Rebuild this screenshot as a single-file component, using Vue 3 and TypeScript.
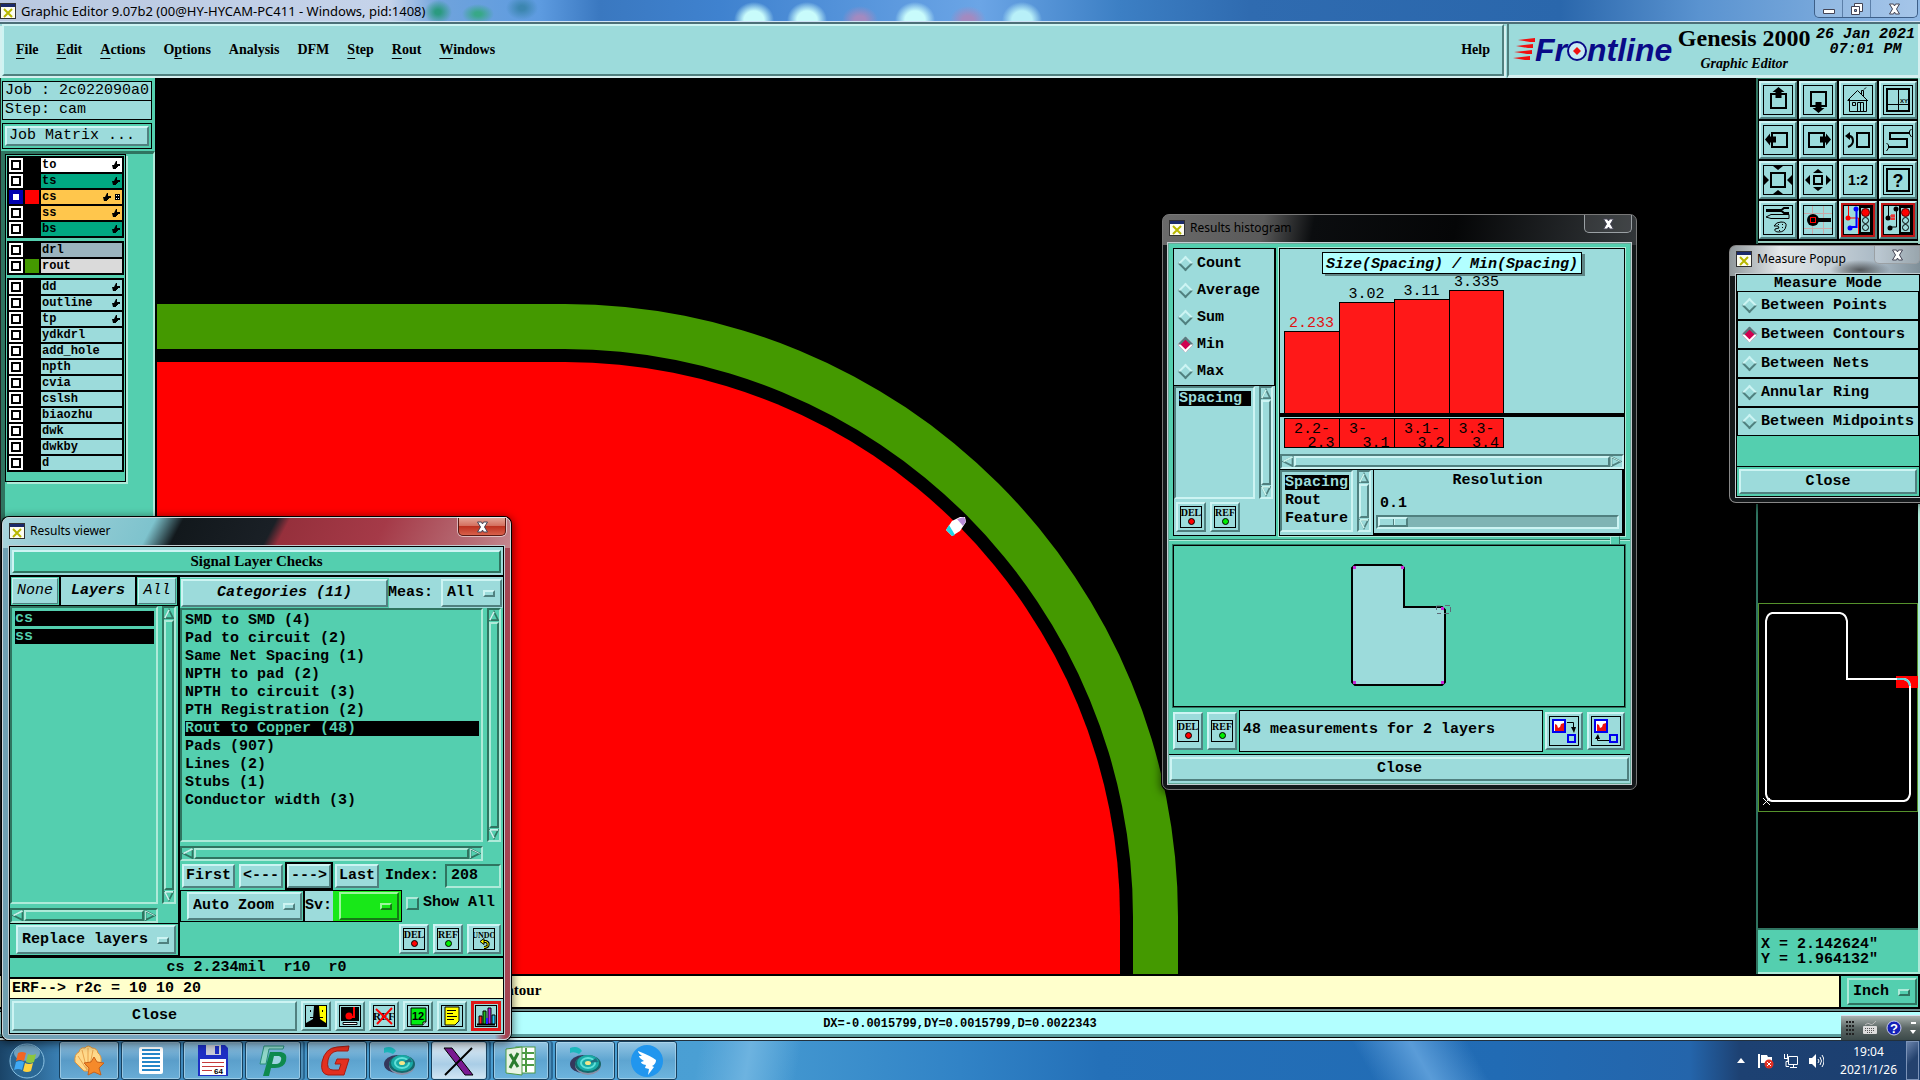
<script setup lang="ts">
import { ref } from 'vue'

interface Layer { name: string; tone: string; swatch?: string; on?: boolean; hand?: boolean; grid?: boolean }
interface Icon { label: string; body: string; alert?: boolean }

const menus = [
  { pre: '', key: 'F', post: 'ile' },
  { pre: '', key: 'E', post: 'dit' },
  { pre: '', key: 'A', post: 'ctions' },
  { pre: 'O', key: 'p', post: 'tions' },
  { pre: 'Analysis', key: '', post: '' },
  { pre: 'DFM', key: '', post: '' },
  { pre: '', key: 'S', post: 'tep' },
  { pre: '', key: 'R', post: 'out' },
  { pre: '', key: 'W', post: 'indows' },
]

const layerGroups: Layer[][] = [
  [
    { name: 'to', tone: 'white', hand: true },
    { name: 'ts', tone: 'mask', hand: true },
    { name: 'cs', tone: 'signal', swatch: '#ff0000', on: true, hand: true, grid: true },
    { name: 'ss', tone: 'signal', hand: true },
    { name: 'bs', tone: 'mask', hand: true },
  ],
  [
    { name: 'drl', tone: 'drill' },
    { name: 'rout', tone: 'rout', swatch: '#449900' },
  ],
  [
    { name: 'dd', tone: 'plain', hand: true },
    { name: 'outline', tone: 'plain', hand: true },
    { name: 'tp', tone: 'plain', hand: true },
    ...['ydkdrl', 'add_hole', 'npth', 'cvia', 'cslsh', 'biaozhu', 'dwk', 'dwkby', 'd'].map((name) => ({ name, tone: 'plain' })),
  ],
]

const frame = '<rect x=".5" y=".5" width="29" height="29" fill="none" stroke="#000"/>'
const lights = (x: number) =>
  `<rect x="${x}" y="2" width="11" height="26" fill="#9cdbdb" stroke="#000" stroke-width="2"/>` +
  `<circle cx="${x + 5.5}" cy="7.5" r="4" fill="#f00" stroke="#500"/>` +
  `<circle cx="${x + 5.5}" cy="15.5" r="3" fill="none" stroke="#000"/>` +
  `<circle cx="${x + 5.5}" cy="22.5" r="3" fill="none" stroke="#000"/>`

const tools: Icon[] = [
  { label: 'Pan up', body: frame + '<rect x="8" y="9" width="15" height="14" fill="none" stroke="#000" stroke-width="2"/><path d="M15.5 2l6 5h-3v6h-6V7h-3z"/>' },
  { label: 'Pan down', body: frame + '<rect x="8" y="7" width="15" height="14" fill="none" stroke="#000" stroke-width="2"/><path d="M15.5 28l6-5h-3v-6h-6v6h-3z"/>' },
  { label: 'Home', body: frame + '<path d="M4.500 15.500l10-10 10 10M6.500 14v12.500h17V14M14.500 26v-8.500h6V26M17.500 18v8M9.500 17.500h3v3h-3zM18.500 9V5.500h2V11M21 4.500l2-2M5 15.500h20" fill="none" stroke="#000"/>' },
  { label: 'Grid view', body: frame + '<rect x="4" y="4" width="22" height="22" fill="none" stroke="#000" stroke-width="2"/><path d="M15.5 4v22M4 19.5h22" stroke="#000"/><text x="17" y="18" font-size="6" font-family="Liberation Sans">XY</text>' },
  { label: 'Pan left', body: frame + '<rect x="9" y="8" width="15" height="14" fill="none" stroke="#000" stroke-width="2"/><path d="M2 14.5l5-6v3h6v6H7v3z"/>' },
  { label: 'Pan right', body: frame + '<rect x="6" y="8" width="15" height="14" fill="none" stroke="#000" stroke-width="2"/><path d="M28 14.5l-5-6v3h-6v6h6v3z"/>' },
  { label: 'Previous view', body: frame + '<rect x="14" y="8" width="12" height="14" fill="none" stroke="#000" stroke-width="2"/><path d="M5 11h2q3 1 3 5t-5 6" fill="none" stroke="#000" stroke-width="2"/><path d="M2 11l5-4v8z"/>' },
  { label: 'Serpentine', body: frame + '<path d="M26 8H7v6h17v8H6" fill="none" stroke="#000" stroke-width="2"/><path d="M28.500 4l-2 2v3l2 3M3.500 18l2 2v3l-2 3" fill="none" stroke="#000"/>' },
  { label: 'Zoom out', body: frame + '<rect x="8" y="8" width="14" height="14" fill="none" stroke="#000" stroke-width="2"/><path d="M10 1h10l-5 4zM10 29h10l-5-4zM1 10v10l5-5zM29 10v10l-5-5z"/>' },
  { label: 'Zoom in', body: frame + '<rect x="11" y="11" width="8" height="8" fill="none" stroke="#000" stroke-width="2"/><path d="M10 8h10l-5-4zM10 22h10l-5 4zM7 10v10l-5-5zM23 10v10l5-5z"/>' },
  { label: 'Scale', body: frame + '<text x="15" y="20" text-anchor="middle" font-size="14" font-weight="bold" font-family="Liberation Sans">1:2</text>' },
  { label: 'Help', body: frame + '<rect x="4" y="4" width="22" height="22" fill="none" stroke="#000" stroke-width="2"/><text x="15" y="22" text-anchor="middle" font-size="18" font-family="Liberation Sans">?</text>' },
  { label: 'Options', body: frame + '<path d="M3 5.5h16" stroke="#000" stroke-width="3"/><path d="M26 3h-5l-3 2.500 3 2.500h5" fill="none" stroke="#000" stroke-width="2"/><path d="M3 12l5-2.500h18v4H8z" fill="none" stroke="#000"/><path d="M11 21q2-4 7-4 6 0 5 4-1 6-7 6-5 0-4-3l4-1-1-2z" fill="none" stroke="#000"/><path d="M15 19.500h1M19 19.500h1M19 22.500h1M16 25.500h1" stroke="#000"/>' },
  { label: 'Edit feature', body: frame + '<path d="M9.5 1v28M20.5 1v28M1 8.500h28M1 23.500h28" stroke="#c8a8a8"/><path d="M10 15h18" stroke="#000" stroke-width="4"/><circle cx="10" cy="15" r="6"/><rect x="7.5" y="12.5" width="5" height="5" fill="#000" stroke="#f00"/>' },
  { label: 'Net check', alert: true, body: frame + '<path d="M5.5 1v12h10v16" fill="none" stroke="#f00"/><path d="M13.5 4v18H7" fill="none" stroke="#00f" stroke-width="2"/><circle cx="5" cy="13" r="2.5" fill="#f00"/><circle cx="13" cy="4" r="2.5" fill="#00f"/><circle cx="7" cy="23" r="2.5" fill="#00f"/>' + lights(17) },
  { label: 'Spacing check', alert: true, body: frame + '<path d="M5.5 1v12M13.5 4v18H7" fill="none" stroke="#000"/><circle cx="5" cy="13" r="2.5"/><circle cx="13" cy="4" r="2.5"/><circle cx="7" cy="23" r="2.5"/><path d="M7 11h5M7 14h5M9 9v6M11 9v6" stroke="#f00"/>' + lights(17) },
]

const small = '<rect x=".5" y=".5" width="21" height="21" fill="none" stroke="#000"/>'
const word = (t: string, size = 10) => `<text x="11" y="10" text-anchor="middle" font-size="${size}" font-family="Liberation Serif">${t}</text>`
const delIcon = small + word('DEL') + '<circle cx="11.5" cy="15.5" r="3" fill="#f00" stroke="#000"/>'
const refIcon = small + word('REF') + '<circle cx="11.5" cy="15.5" r="3" fill="#0e0" stroke="#000"/>'
const undoIcon = small + word('UNDO', 8) + '<path d="M9 13.5h4q3 1 2 4-1 2-4 2" fill="none" stroke="#000" stroke-width="3"/><path d="M9 13.5h4q3 1 2 4-1 2-4 2" fill="none" stroke="#ff0"/><path d="M7 13.5l4-3v6z" fill="#ff0" stroke="#000"/>'

const reportIcons: Icon[] = [
  { label: 'Contrast view', body: small + '<path d="M11 1h10v20H11z" fill="#ff0"/><path d="M9 1h5l1 13 6 4v3H1v-3l7-4z"/><path d="M5.500 5v2M5 12.500h4M17.500 5v2M18 12.500h-4" stroke="#000"/>' },
  { label: 'Snapshot', body: small + '<path d="M2 2h18v14H2z"/><path d="M4 17.500h14v2H4z" fill="#fff" stroke="#000"/><circle cx="10" cy="11" r="3.5" fill="#f00"/><path d="M15 2v10h-5" fill="none" stroke="#f00" stroke-width="2"/>' },
  { label: 'Clear reference', body: small + '<text x="11" y="15" text-anchor="middle" font-size="11" font-family="Liberation Serif">REF</text><path d="M3 4l16 15M19 3L4 19" stroke="#f00" stroke-width="2"/>' },
  { label: 'Numbered notes', body: small + '<path d="M4 3h15v14l-3 3H4z" fill="#0e1" stroke="#000"/><path d="M16 20v-3h3" fill="#fff" stroke="#000"/><text x="11" y="15" text-anchor="middle" font-size="11" font-weight="bold" font-family="Liberation Sans">12</text>' },
  { label: 'Text notes', body: small + '<path d="M4 2h14v14l-4 4H4z" fill="#ff0" stroke="#000"/><path d="M6 5.5h9M6 8.5h6M6 11.5h10M6 14.5h7" stroke="#000"/>' },
  { label: 'Histogram', alert: true, body: small + '<path d="M2 19.5h18" stroke="#000" stroke-width="2"/><path d="M4 11h3v8H4z" fill="#f22" stroke="#000"/><path d="M8 6h3v13H8z" fill="#2b2" stroke="#000"/><path d="M13 3h3v16h-3z" fill="#b2d" stroke="#000"/><path d="M17 10h3v9h-3z" fill="#2cf" stroke="#000"/><path d="M11 13h2v6h-2z" fill="#22f"/>' },
]

const categories = [
  'SMD to SMD (4)', 'Pad to circuit (2)', 'Same Net Spacing (1)', 'NPTH to pad (2)', 'NPTH to circuit (3)',
  'PTH Registration (2)', 'Rout to Copper (48)', 'Pads (907)', 'Lines (2)', 'Stubs (1)', 'Conductor width (3)',
]
const selected = ref('Rout to Copper (48)')

const stats = ['Count', 'Average', 'Sum', 'Min', 'Max']
const stat = ref('Min')
const bars = [
  { value: '2.233', from: '2.2-', to: '2.3', height: 82, low: true },
  { value: '3.02', from: '3-  ', to: '3.1', height: 111 },
  { value: '3.11', from: '3.1-', to: '3.2', height: 114 },
  { value: '3.335', from: '3.3-', to: '3.4', height: 123 },
]

const modes = ['Between Points', 'Between Contours', 'Between Nets', 'Annular Ring', 'Between Midpoints']
const mode = ref('Between Contours')
const index = ref('208')
const showAll = ref(false)
const resolution = ref(0)

const discIcon = '<ellipse cx="15" cy="20" rx="13" ry="9" fill="#34385c"/><ellipse cx="20" cy="21" rx="13" ry="10" fill="#8a90a8"/><ellipse cx="20" cy="20" rx="13" ry="9" fill="#14686c"/><ellipse cx="20" cy="19" rx="11" ry="8" fill="#19a9a6"/><ellipse cx="20" cy="19" rx="7" ry="5" fill="none" stroke="#5fe0d8" stroke-width="2"/><path d="M20 19l8-5 2 4z" fill="#1f6f80"/><ellipse cx="20" cy="19" rx="3" ry="2" fill="#f4e58a"/><path d="M2 4q8-3 12 3l-3 3q-5-3-9-1z" fill="#1cb8bd"/>'
const tasks = [
  { label: 'Shell', body: '<path d="M3 18Q2 10 7 8q1-5 6-4 3-4 7 0 5 0 6 5 4 3 3 9L20 27h-8z" fill="#ffd98a" stroke="#e2953a"/><path d="M15 26L6 12M15 26L10 6M16 26L16 4M17 26l4-20" stroke="#e9a44e"/><path d="M22 13l3 5 7 1-5 5 2 7-7-3-6 3 1-7-5-5 7-1z" fill="#f58a2a" stroke="#c9611a"/>' },
  { label: 'Notepad', body: '<rect x="5" y="3" width="24" height="27" rx="2" fill="#fff"/><path d="M8 6h18M8 10h18M8 14h18M8 18h18M8 22h18M8 26h18" stroke="#2586c8" stroke-width="2"/>' },
  { label: 'Disk 64', body: '<path d="M2 1h27l3 3v28H2z" fill="#1d2fc4"/><path d="M10 1h15v10H10z" fill="#c8ccd6"/><path d="M19 2h4v8h-4z" fill="#1d2fc4"/><path d="M4 15h26v16H4z" fill="#fff"/><path d="M6 18.500h22M6 22.500h22M6 26.500h10" stroke="#c43a3a"/><text x="18" y="30" font-size="8" font-weight="bold" font-family="Liberation Sans">64</text>' },
  { label: 'Project', stack: true, body: '<path d="M8 2h20l-1 3H13l-3 15H4z" fill="#8fd6c8" stroke="#2a8f7a"/><path d="M14 8h11q7 1 5 9-2 7-11 7h-4l-2 8H7z" fill="#0e8a4e"/><path d="M18 12h5q3 1 2 4-1 4-5 4h-4z" fill="#9ed4e0"/>' },
  { label: 'Genesis', body: '<path d="M29 2l-1 5H17q-7 1-9 9-2 10 5 10h6l2-6h-6l2-5h12l-5 16H8Q0 30 2 18 5 4 17 3z" fill="#e3301f" stroke="#a51c12"/>' },
  { label: 'Disc', body: discIcon },
  { label: 'X server', active: true, stack: true, body: '<path d="M2 4h8l21 27h-8z" fill="#7a1a92" stroke="#000"/><path d="M30 4L3 31" stroke="#000" stroke-width="2"/>' },
  { label: 'Spreadsheet', stack: true, body: '<rect x="12" y="3" width="19" height="26" fill="#fff" stroke="#4d9a44"/><path d="M13 9h17M13 15h17M13 21h17M22 4v24" stroke="#4d9a44" stroke-width="2"/><path d="M2 5l16-2v28L2 29z" fill="#e9f4e4" stroke="#4d9a44"/><path d="M6 10l8 13M14 9L6 24" stroke="#2b7d2f" stroke-width="3"/>' },
  { label: 'Disc viewer', body: discIcon },
  { label: 'Messenger', body: '<circle cx="17" cy="17" r="16" fill="#2196ee"/><path d="M8 7q13 5 18 9 0 4-4 6l2 1-6 8 1-6-4-1 1-3q-5-1-5-3l3-1q-5-3-5-5l3 0q-4-3-4-5z" fill="#fff"/>' },
]
</script>

<template>
  <div class="desktop">
    <svg width="0" height="0" class="defs" aria-hidden="true">
      <symbol id="app-x" viewBox="0 0 16 16"><path d="M0 0h16v16H0z" fill="#333" /><path d="M1 4h14v11H1z" fill="#fdfdf0" /><path d="M1 1h14v3H1z" fill="#1b2a6b" /><path d="M4 6l8 8M12 6l-8 8" stroke="#b8b800" stroke-width="2" /></symbol>
      <symbol id="arrow-up" viewBox="0 0 12 12"><path d="M6 1L1 11h10z" fill="none" stroke="currentColor" stroke-width="2" /><path d="M6 1L1 11" stroke="#c9f3ec" stroke-width="2" /></symbol>
      <symbol id="arrow-down" viewBox="0 0 12 12"><path d="M1 1h10L6 11z" fill="none" stroke="currentColor" stroke-width="2" /><path d="M1 1h10M1 1l5 10" stroke="#c9f3ec" stroke-width="2" /></symbol>
      <symbol id="arrow-left" viewBox="0 0 12 12"><path d="M1 6l10-5v10z" fill="none" stroke="currentColor" stroke-width="2" /><path d="M1 6l10-5" stroke="#c9f3ec" stroke-width="2" /></symbol>
      <symbol id="arrow-right" viewBox="0 0 12 12"><path d="M11 6L1 1v10z" fill="none" stroke="currentColor" stroke-width="2" /><path d="M1 11V1l10 5" fill="none" stroke="#c9f3ec" stroke-width="1" /></symbol>
      <symbol id="glyph-x" viewBox="0 0 12 12"><path d="M1 1h4l1 2 1-2h4L8 6l3 5H7L6 9l-1 2H1l3-5z" fill="#fff" stroke="#445" stroke-width="1" /></symbol>
      <symbol id="hand" viewBox="0 0 8 8"><path d="M0 4h2l2-4h1v3h3v2H6v1H5v1H4v1H1z" /></symbol>
    </svg>

    <header class="caption">
      <svg class="app-icon"><use href="#app-x" /></svg>
      <span>Graphic Editor 9.07b2 (00@HY-HYCAM-PC411 - Windows, pid:1408)</span>
      <div class="caption-buttons">
        <button aria-label="Minimize"><svg width="14" height="12"><path d="M1.500 6.500h11v4h-11z" fill="#fff" stroke="#445" /></svg></button>
        <button aria-label="Restore"><svg width="14" height="14"><path d="M4.500 1.500h8v8h-8z" fill="#fff" stroke="#445" /><path d="M1.500 4.500h8v8h-8z" fill="#fff" stroke="#445" /><path d="M4.500 7.500h2v2h-2z" fill="#7aa6d8" stroke="#445" /></svg></button>
        <button class="wide" aria-label="Close"><svg width="13" height="12"><use href="#glyph-x" /></svg></button>
      </div>
    </header>

    <div class="topbar">
      <nav class="menubar">
        <button v-for="m in menus" :key="m.pre + m.key" class="menu">{{ m.pre }}<u>{{ m.key }}</u>{{ m.post }}</button>
        <button class="menu help">Help</button>
      </nav>
      <div class="brand">
        <div class="logo">
          <svg width="22" height="26" viewBox="0 0 22 26"><path d="M5 3l17-2v4h-5zM3 9l17-2v4h-5zM1 15l18-2v4h-5zM0 21l17-2v4h-5z" fill="#f01010" /></svg>
          <span>Fr</span><svg width="20" height="22" viewBox="0 0 20 22"><circle cx="10" cy="12" r="9" fill="#c9ecf4" stroke="#0a0a88" stroke-width="2" /><path d="M10 8l2 2 2 2-2 2-2 2-2-2-2-2 2-2z" fill="#f01010" /></svg><span>ntline</span>
        </div>
        <div class="product"><strong>Genesis 2000</strong><em>Graphic Editor</em></div>
        <div class="clock"><span>26 Jan 2021</span><span>07:01 PM</span></div>
      </div>
    </div>

    <main class="work">
      <aside class="layers">
        <div class="job">
          <p>Job : 2c022090a0</p>
          <p>Step: cam</p>
        </div>
        <div class="matrix"><button class="btn mono-regular">Job Matrix ...</button></div>
        <div class="layer-well">
          <div class="layer-frame">
            <div v-for="(group, g) in layerGroups" :key="g" class="layer-group">
              <label v-for="l in group" :key="l.name" class="layer">
                <input type="checkbox" :checked="l.on" />
                <i class="swatch" :style="{ background: l.swatch || '#000' }"></i>
                <span :class="['layer-name', l.tone]">
                  <span>{{ l.name }}</span>
                  <svg v-if="l.hand" width="8" height="8"><use href="#hand" /></svg>
                  <svg v-if="l.grid" width="5" height="6"><path d="M0 0h5v6H0z" /><path d="M1 1h1v1H1zM3 1h1v1H3zM1 4h1v1H1zM3 4h1v1H3z" fill="#fff" /></svg>
                </span>
              </label>
            </div>
          </div>
        </div>
      </aside>

      <svg class="board" viewBox="157 78 1599 896" preserveAspectRatio="xMinYMin slice" aria-label="Board view">
        <path d="M157 304H565A613 613 0 0 1 1178 917V1400H1133V917A568 568 0 0 0 565 349H157z" fill="#449900" />
        <path d="M157 362H565A555 555 0 0 1 1120 917V1400H157z" fill="#f00" />
        <path d="M946 530l6-9 8-4h5l1 5-6 9-8 5z" fill="#fff" />
        <path d="M946 530l3-5 6 10-3 1z" fill="#20d8e8" />
        <path d="M957 519l7-2 2 4-3 5z" fill="#b88cd8" />
      </svg>

      <aside class="side">
        <div class="tools">
          <button v-for="t in tools" :key="t.label" :class="['tool', { alert: t.alert }]" :aria-label="t.label">
            <svg width="30" height="30" viewBox="0 0 30 30" v-html="t.body"></svg>
          </button>
        </div>
        <div class="overview">
          <svg viewBox="0 0 160 210" aria-label="Overview">
            <rect x=".5" y=".5" width="159" height="208" fill="none" stroke="#55922c" />
            <rect x="138" y="73" width="22" height="12" fill="#f00" />
            <path d="M14 10H82Q88 11 89 18V76H146Q151 77 152 82V191Q151 197 146 198H14Q9 197 8 191V18Q9 11 14 10z" fill="none" stroke="#fff" stroke-width="2" />
            <path d="M139 76h7q5 1 6 7" fill="none" stroke="#5fd8e0" stroke-width="2" />
            <path d="M5 195l7 7M12 195l-7 7" stroke="#fff" />
          </svg>
        </div>
        <div class="coords"><span>X = 2.142624"</span><span>Y = 1.964132"</span></div>
      </aside>
    </main>

    <div class="prompt">
      <p>Select second contour</p>
      <div class="unit"><div class="drop"><select aria-label="Unit"><option>Inch</option></select></div></div>
    </div>
    <div class="measure"><output>DX=-0.0015799,DY=0.0015799,D=0.0022343</output></div>

    <footer class="taskbar">
      <button class="orb" aria-label="Start">
        <svg width="36" height="36" viewBox="0 0 36 36">
          <circle cx="18" cy="18" r="17" fill="#2a6896" stroke="#8cc3e4" /><ellipse cx="18" cy="10" rx="13" ry="8" fill="#8fbad2" opacity=".7" />
          <path d="M9 10q4-2 8 0l-2 8q-4-2-8 0z" fill="#f26522" /><path d="M19 11q4 2 8 0l-2 8q-4 2-8 0z" fill="#8cc63f" />
          <path d="M7 19q4-2 8 0l-2 8q-4-2-8 0z" fill="#3fa9f5" /><path d="M16 20q4 2 8 0l-2 8q-4 2-8 0z" fill="#ffd23f" />
        </svg>
      </button>
      <div class="tasks">
        <button v-for="t in tasks" :key="t.label" :class="['task', { stack: t.stack, active: t.active }]" :aria-label="t.label">
          <svg width="34" height="34" viewBox="0 0 34 34" v-html="t.body"></svg>
        </button>
      </div>
      <div class="tray">
        <svg width="8" height="5"><path d="M0 5l4-5 4 5z" fill="#fff" /></svg>
        <svg width="16" height="16"><path d="M1 1v14" stroke="#fff" stroke-width="2" /><path d="M3 2h6l1 2h4v6H3z" fill="#fff" /><circle cx="11" cy="11" r="4.5" fill="#e03024" /><path d="M9 9l4 4M13 9l-4 4" stroke="#fff" /></svg>
        <svg width="16" height="16"><path d="M5.500 3.500h9v8h-9zM7 14.500h7M10.500 12v3M1.500 1v4M4.500 1v4M1 5.500h4v3H3v5h3" fill="none" stroke="#fff" /></svg>
        <svg width="16" height="16"><path d="M1 5h3l4-4v14l-4-4H1z" fill="#fff" /><path d="M10 6q2 2 0 4M12 4q3 4 0 8M14 2q4 6 0 12" fill="none" stroke="#fff" /></svg>
        <time><span>19:04</span><span>2021/1/26</span></time>
        <button class="peek" aria-label="Show desktop"></button>
      </div>
      <div class="langbar">
        <svg width="10" height="16"><path d="M1 2h8M1 6h8M1 10h8M1 14h8" stroke="#222" stroke-width="2" stroke-dasharray="2 1" /></svg>
        <svg width="16" height="14"><path d="M3 4q3-3 5-1t6-3" stroke="#bbb" fill="none" /><rect x="1" y="5" width="14" height="8" rx="1" fill="#ddd" /><path d="M3 7.5h10M3 9.5h10M5 11.5h6" stroke="#555" stroke-dasharray="1 1" /></svg>
        <svg width="16" height="16"><circle cx="8" cy="8" r="7" fill="#1420b8" stroke="#c8ccee" /><text x="8" y="13" text-anchor="middle" fill="#fff" font-size="13" font-weight="bold" font-family="Liberation Sans">?</text></svg>
        <svg width="8" height="16"><path d="M2 2h5v2H2zM1 10h6l-3 4z" fill="#fff" /></svg>
      </div>
    </footer>

    <section class="window viewer" aria-label="Results viewer">
      <div class="win-title"><svg class="app-icon"><use href="#app-x" /></svg><span>Results viewer</span>
        <button class="win-close red" aria-label="Close"><svg width="13" height="12"><use href="#glyph-x" /></svg></button></div>
      <div class="client">
        <div class="check-head"><h2>Signal Layer Checks</h2></div>
        <div class="viewer-body">
          <div class="layer-col">
            <div class="layer-tabs"><button class="btn light-italic">None</button><strong>Layers</strong><button class="btn light-italic">All</button></div>
            <div class="listing">
              <ul class="well"><li class="on">cs</li><li class="on">ss</li></ul>
              <div class="sb v"><svg><use href="#arrow-up" /></svg><i></i><svg><use href="#arrow-down" /></svg></div>
              <div class="sb h"><svg><use href="#arrow-left" /></svg><i></i><svg><use href="#arrow-right" /></svg></div>
            </div>
            <div class="replace"><div class="drop"><select aria-label="Layer mode"><option>Replace layers</option></select></div></div>
          </div>
          <div class="cat-col">
            <div class="cat-tabs">
              <button class="btn cat-title">Categories (11)</button>
              <label for="meas">Meas:</label>
              <div class="drop"><select id="meas"><option>All</option></select></div>
            </div>
            <div class="listing">
              <ul class="well"><li v-for="c in categories" :key="c" :class="{ on: c === selected }" @click="selected = c">{{ c }}</li></ul>
              <div class="sb v"><svg><use href="#arrow-up" /></svg><i></i><svg><use href="#arrow-down" /></svg></div>
              <div class="sb h"><svg><use href="#arrow-left" /></svg><i></i><svg><use href="#arrow-right" /></svg></div>
            </div>
            <div class="stepper">
              <button class="btn first">First</button><button class="btn prev">&lt;---</button><span class="default"><button class="btn">---&gt;</button></span><button class="btn last">Last</button>
              <label for="idx">Index:</label><input id="idx" v-model="index" type="text" />
            </div>
            <div class="zoomer">
              <div class="zoom-box"><div class="drop"><select aria-label="Zoom mode"><option>Auto Zoom</option></select></div></div>
              <label for="sv" class="sv">Sv:</label>
              <div class="sv-box"><div class="drop green"><select id="sv"><option></option></select></div></div>
              <label class="show"><input v-model="showAll" type="checkbox" />Show All</label>
            </div>
            <div class="actions">
              <button class="ibtn" aria-label="Delete"><svg width="22" height="22" v-html="delIcon"></svg></button>
              <button class="ibtn" aria-label="Reference"><svg width="22" height="22" v-html="refIcon"></svg></button>
              <button class="ibtn undo" aria-label="Undo"><svg width="22" height="22" v-html="undoIcon"></svg></button>
            </div>
          </div>
        </div>
        <p class="finding">cs 2.234mil&nbsp; r10&nbsp; r0</p>
        <p class="erf">ERF--&gt; r2c = 10 10 20</p>
        <div class="report">
          <button class="btn">Close</button>
          <button v-for="r in reportIcons" :key="r.label" :class="['ibtn', { alert: r.alert }]" :aria-label="r.label"><svg width="22" height="22" v-html="r.body"></svg></button>
        </div>
      </div>
    </section>

    <section class="window histogram" aria-label="Results histogram">
      <div class="win-title"><svg class="app-icon"><use href="#app-x" /></svg><span>Results histogram</span>
        <button class="win-close" aria-label="Close"><svg width="13" height="12"><use href="#glyph-x" /></svg></button></div>
      <div class="client">
        <div class="hist-top">
          <div class="stat-col">
            <div class="radios"><label v-for="s in stats" :key="s"><input v-model="stat" type="radio" name="stat" :value="s" />{{ s }}</label></div>
            <div class="listing pale">
              <ul class="well"><li class="on">Spacing</li></ul>
              <div class="sb v"><svg><use href="#arrow-up" /></svg><i></i><svg><use href="#arrow-down" /></svg></div>
            </div>
            <div class="stat-actions">
              <button class="ibtn" aria-label="Delete"><svg width="22" height="22" v-html="delIcon"></svg></button>
              <button class="ibtn" aria-label="Reference"><svg width="22" height="22" v-html="refIcon"></svg></button>
            </div>
          </div>
          <div class="chart-col">
            <div class="chart">
              <h3>Size(Spacing) / Min(Spacing)</h3>
              <div class="bars">
                <div v-for="b in bars" :key="b.value" class="bar">
                  <span :class="{ low: b.low }">{{ b.value }}</span>
                  <i :style="{ height: b.height + 'px' }"></i>
                </div>
              </div>
              <div class="ranges"><div v-for="b in bars" :key="b.value"><span>{{ b.from }}</span><span>&nbsp; {{ b.to }}</span></div></div>
              <div class="sb h pale"><svg><use href="#arrow-left" /></svg><i></i><svg><use href="#arrow-right" /></svg></div>
            </div>
            <div class="params">
              <div class="listing pale">
                <ul class="well"><li class="on">Spacing</li><li>Rout</li><li>Feature</li></ul>
                <div class="sb v"><svg><use href="#arrow-up" /></svg><i></i><svg><use href="#arrow-down" /></svg></div>
              </div>
              <div class="resolution"><label for="res">Resolution</label><output>0.1</output><input id="res" v-model="resolution" type="range" min="0" max="10" /></div>
            </div>
          </div>
        </div>
        <div class="sash"><i></i></div>
        <div class="map">
          <svg width="112" height="126" viewBox="0 0 112 126" aria-label="Panel outline">
            <path d="M4 2H50L53 5V44H91L94 47V119L91 122H4L1 119V5z" fill="#9cdbdb" stroke="#000" stroke-width="2" />
            <path d="M2 3h3v3H2zM50 3h3v3h-3zM2 118h3v3H2zM90 118h3v3h-3zM90 44h3v3h-3z" fill="#c828d8" />
            <path d="M85.500 47v-4h4M86 50.500h4M93 50.500h5M94 42.500h5M99.500 44v5" fill="none" stroke="#5d6a78" />
          </svg>
        </div>
        <div class="hist-foot">
          <button class="ibtn" aria-label="Delete"><svg width="22" height="22" v-html="delIcon"></svg></button>
          <button class="ibtn" aria-label="Reference"><svg width="22" height="22" v-html="refIcon"></svg></button>
          <p>48 measurements for 2 layers</p>
          <button class="ibtn big" aria-label="Send to map"><svg width="30" height="30"><rect x=".5" y=".5" width="29" height="29" fill="none" stroke="#000" /><rect x="4" y="4" width="12" height="12" fill="#fff" stroke="#00e" stroke-width="2" /><path d="M6 15V8l2 1 1 3 2-1 1-3 3-1v8z" fill="#e11" /><path d="M18 6.5h6.500v6" fill="none" stroke="#000" /><path d="M22 11h5l-2 6z" /><rect x="19" y="19" width="7" height="7" fill="none" stroke="#00e" stroke-width="2" /></svg></button>
          <button class="ibtn big" aria-label="Bring from map"><svg width="30" height="30"><rect x=".5" y=".5" width="29" height="29" fill="none" stroke="#000" /><rect x="4" y="4" width="12" height="12" fill="#fff" stroke="#00e" stroke-width="2" /><path d="M6 15V8l2 1 1 3 2-1 1-3 3-1v8z" fill="#e11" /><path d="M18 24.5H6.5V20" fill="none" stroke="#000" /><path d="M4 23h5l-2-5z" /><rect x="19" y="19" width="7" height="7" fill="none" stroke="#00e" stroke-width="2" /></svg></button>
        </div>
        <div class="close-row"><button class="btn">Close</button></div>
      </div>
    </section>

    <section class="window popup" aria-label="Measure Popup">
      <div class="win-title"><svg class="app-icon"><use href="#app-x" /></svg><span>Measure Popup</span>
        <button class="win-close" aria-label="Close"><svg width="13" height="12"><use href="#glyph-x" /></svg></button></div>
      <div class="client">
        <h2>Measure Mode</h2>
        <label v-for="m in modes" :key="m"><input v-model="mode" type="radio" name="mode" :value="m" />{{ m }}</label>
        <div class="popup-close"><button class="btn">Close</button></div>
      </div>
    </section>
  </div>
</template>

<style>
body { margin: 0; background: #000; overflow: hidden; }
</style>

<style scoped>
*, *::after { box-sizing: border-box; margin: 0; padding: 0; }
.desktop {
  --pale: #9cdbdb; --pale-hi: #cdf4f3; --pale-lo: #50807f;
  --sea: #54cfaf; --sea-hi: #aeead9; --sea-lo: #2f7460;
  position: relative; display: flex; flex-direction: column; min-height: 100vh; overflow: hidden;
  background: #000; color: #000; font: bold 15px/18px "Liberation Mono", monospace;
}
svg { display: block; flex: none; }
.defs { position: absolute; }
button, input, select { font: inherit; color: inherit; border-radius: 0; }
button { border: 0; background: none; }
ul { list-style: none; }
.app-icon { width: 16px; height: 16px; }

/* Bevelled controls */
.btn, .drop { background: var(--pale); border: 2px solid; border-color: var(--pale-hi) var(--pale-lo) var(--pale-lo) var(--pale-hi); }
.btn { line-height: 16px; white-space: nowrap; }
.mono-regular { font-weight: normal; }
.light-italic { font-weight: normal; font-style: italic; }
.drop { position: relative; display: flex; }
.drop select { appearance: none; flex: 1; min-width: 0; background: none; border: 0; outline: 0; padding: 0 18px 0 4px; }
.drop::after { content: ""; position: absolute; right: 5px; top: 50%; width: 12px; height: 7px; margin-top: -3px; border: 2px solid; border-color: var(--pale-hi) var(--pale-lo) var(--pale-lo) var(--pale-hi); }
.drop.green { background: #18e818; --pale-hi: #9df79d; --pale-lo: #157a15; }
.ibtn { display: flex; align-items: center; justify-content: center; width: 30px; height: 30px; flex: none; background: var(--pale); border: 2px solid; border-color: var(--pale-hi) var(--pale-lo) var(--pale-lo) var(--pale-hi); }
.ibtn.alert { border: 3px solid #e01818; }
input[type="radio"] { appearance: none; width: 11px; height: 11px; margin: 0 6px 0 2px; flex: none; border: 2px solid; border-color: var(--pale-hi) var(--pale-lo) var(--pale-lo) var(--pale-hi); transform: rotate(45deg); }
input[type="radio"]:checked { background: #d00050; border-color: var(--pale-lo) #fff #fff var(--pale-lo); }

/* Lists and scroll bars */
.listing { display: grid; grid-template: 1fr 15px / 1fr 14px; gap: 4px; padding: 0 2px 0 0; background: var(--sea); color: #000; min-height: 0; }
.well { padding: 3px 2px 0 3px; border: 2px solid; border-color: var(--sea-lo) var(--sea-hi) var(--sea-hi) var(--sea-lo); overflow: hidden; }
.well li { height: 15px; margin-bottom: 3px; line-height: 15px; white-space: nowrap; }
.well li.on { background: #000; color: var(--sea); }
.sb { display: flex; color: var(--sea-lo); background: var(--sea); border: 2px solid; border-color: var(--sea-lo) var(--sea-hi) var(--sea-hi) var(--sea-lo); }
.sb.v { flex-direction: column; }
.sb svg { width: 10px; height: 12px; }
.sb.h svg { width: 12px; height: 11px; }
.sb i { flex: 1; border: 2px solid; border-color: var(--sea-hi) var(--sea-lo) var(--sea-lo) var(--sea-hi); }
.pale { --sea: var(--pale); --sea-hi: var(--pale-hi); --sea-lo: var(--pale-lo); }

/* Caption */
.caption {
  display: flex; align-items: center; gap: 5px; height: 22px; flex: none; border-bottom: 1px solid #cfe2f4;
  font: 13px/18px "Noto Sans", sans-serif; overflow: hidden;
  background:
    radial-gradient(ellipse 20px 18px at 754px 20px, #c8fbfb 50%, transparent),
    radial-gradient(ellipse 20px 18px at 807px 20px, #c8fbfb 50%, transparent),
    radial-gradient(ellipse 18px 14px at 860px 20px, #a38ac0 30%, transparent),
    radial-gradient(ellipse 20px 18px at 915px 20px, #c8fbfb 50%, transparent),
    radial-gradient(ellipse 18px 14px at 968px 20px, #a38ac0 30%, transparent),
    radial-gradient(ellipse 20px 18px at 1022px 20px, #b8f0f8 50%, transparent),
    radial-gradient(ellipse 14px 12px at 438px 12px, #2b9a80 20%, transparent),
    radial-gradient(ellipse 16px 10px at 478px 14px, #38a888 20%, transparent),
    radial-gradient(ellipse 16px 12px at 522px 8px, #3c86b0 20%, transparent),
    linear-gradient(90deg, #b9c8e0 0, #c5d3ea 390px, #6fa3dc 440px, #5d9be0 540px, #3a78c0 600px, #3f82cf 720px, #6ba5e6 980px, #3c7fc4 1120px, #2f6bb0 1250px, #2a67ac 1560px, #5a93d0 1700px, #8fb8e4 100%);
}
.caption-buttons { align-self: flex-start; display: flex; margin-left: auto; margin-right: 2px; height: 18px; border: 1px solid #3d5f88; border-top: 0; border-radius: 0 0 5px 5px; overflow: hidden; }
.caption-buttons button { display: grid; place-items: center; width: 28px; background: #ffffff33; border-right: 1px solid #5c7fa8; }
.caption-buttons .wide { width: 46px; border: 0; }

/* Menu row */
.topbar { display: flex; height: 56px; flex: none; background: var(--pale); border-top: 2px solid #4c6f78; }
.menubar { flex: 1; display: flex; align-items: center; gap: 18px; padding: 0 12px; margin: 0 2px 2px; border: 2px solid; border-color: var(--pale-hi) var(--pale-lo) var(--pale-lo) var(--pale-hi); box-shadow: 2px 2px 0 #d5f0f0, -2px 2px 0 #d5f0f0; }
.menu { font: bold 14px/20px "Liberation Serif", serif; }
.menu u { text-underline-offset: 4px; }
.help { margin-left: auto; }
.brand { display: flex; width: 413px; padding: 0 3px 0 4px; border-left: 2px solid var(--pale-lo); border-right: 2px solid #d5f0f0; border-bottom: 3px solid #d5f0f0; margin-left: 1px; }
.logo { display: flex; align-items: center; color: #0a0a88; font: italic bold 32px/52px "Liberation Sans", sans-serif; }
.product { flex: 1; display: flex; flex-direction: column; align-items: center; white-space: nowrap; font-family: "Liberation Serif", serif; }
.product strong { font-size: 24px; line-height: 28px; }
.product em { font-size: 14px; line-height: 24px; }
.clock { display: flex; flex-direction: column; align-items: center; padding-top: 3px; font-style: italic; line-height: 15px; white-space: nowrap; }

/* Work area */
.work { flex: 1; display: flex; min-height: 0; }
.layers { width: 157px; flex: none; display: flex; flex-direction: column; background: var(--sea); border-right: 2px solid #000; border-left: 1px solid #222; }
.job { margin: 3px 3px 3px 1px; border: 1px solid #000; font-weight: normal; background: var(--pale); }
.job p { height: 18px; padding-left: 2px; }
.job p + p { height: 19px; border-top: 1px solid #000; }
.matrix { margin: 0 3px 2px 1px; padding: 2px; border: 1px solid #000; }
.matrix .btn { display: block; width: 100%; height: 20px; text-align: left; padding-left: 2px; }
.layer-well { flex: 1; border-top: 3px solid var(--sea-lo); border-left: 4px solid var(--sea-lo); border-right: 2px solid var(--sea-hi); }
.layer-frame { width: 121px; border: 1px solid #000; padding: 1px 1px 9px; box-shadow: 2px 2px 0 var(--sea-hi); display: flex; flex-direction: column; gap: 3px; }
.layer-group { display: grid; gap: 2px; padding: 2px; background: #000; }
.layer { display: flex; gap: 2px; height: 14px; }
.layer input { appearance: none; width: 14px; height: 14px; background: #fff; border: 2px solid #fff; outline: 2px solid #000; outline-offset: -4px; }
.layer input:checked { border-color: #0000b0; outline-color: #0000b0; }
.swatch { width: 14px; }
.layer-name { flex: 1; display: flex; align-items: center; gap: 4px; padding: 0 2px 0 1px; font-size: 12px; line-height: 13px; }
.layer-name span { flex: 1; }
.white { background: #fff; } .mask { background: #00a882; } .signal { background: #ffc64c; }
.drill { background: #9bb4be; } .rout { background: #dadada; } .plain { background: var(--pale); }
.board { flex: 1; min-width: 0; width: 0; height: auto; align-self: stretch; }
.side { width: 164px; flex: none; display: flex; flex-direction: column; border-left: 2px solid var(--sea-lo); border-right: 2px solid var(--sea-hi); }
.tools { display: grid; grid-template-columns: repeat(4, 38px); gap: 2px; padding: 2px 0 2px 1px; border-top: 1px solid var(--sea-lo); border-bottom: 2px solid var(--sea-hi); }
.tool { display: grid; place-items: center; height: 38px; background: var(--pale); border: 2px solid; border-color: var(--pale-hi) var(--pale-lo) var(--pale-lo) var(--pale-hi); }
.tool.alert { box-shadow: inset 0 0 0 3px #c01818; }
.overview { flex: 1; display: flex; flex-direction: column; justify-content: flex-end; padding-bottom: 115px; }
.coords { height: 46px; display: flex; flex-direction: column; justify-content: center; padding: 2px 0 0 3px; line-height: 15px; background: var(--sea); border-top: 2px solid var(--sea-lo); border-bottom: 2px solid var(--sea-hi); white-space: nowrap; }

.prompt { display: flex; height: 35px; flex: none; border-top: 2px solid #000; border-bottom: 2px solid #000; background: #000; }
.prompt p { flex: 1; padding-left: 403px; background: #ffffcc; font: bold 15px/29px "Liberation Serif", serif; }
.unit { width: 77px; margin: 0 2px; padding: 2px 1px 2px 6px; background: var(--sea); }
.unit .drop { height: 27px; --pale: var(--sea); --pale-hi: var(--sea-hi); --pale-lo: var(--sea-lo); }
.measure { height: 31px; flex: none; background: #b2ffff; border-top: 2px solid #6f8f8f; border-bottom: 2px solid #e8ffff; text-align: center; font-size: 12px; line-height: 26px; box-shadow: inset 0 1px 0 #000, inset 0 -1px 0 #000, inset 0 -4px 0 #5a9c9c; }

/* Task bar */
.taskbar { position: relative; display: flex; height: 40px; flex: none; border-top: 1px solid #22303c; color: #fff;
  background: linear-gradient(100deg, transparent 690px, #6db3e0 740px, transparent 790px), linear-gradient(60deg, transparent 1190px, #5a9cd8 1240px, transparent 1290px), linear-gradient(90deg, #1a4468 0, #3a80b4 60px, #489ccf 400px, #4a9fd4 700px, #3183c6 960px, #2470b8 1100px, #216bb4 1500px, #2465ab 1690px, #1d4172 1740px, #1c3f70 100%); }
.orb { padding: 0 0 0 9px; width: 59px; }
.tasks { display: flex; gap: 2px; }
.task { display: grid; place-items: center; width: 60px; height: 39px; border: 1px solid #17405e; border-radius: 3px; background: linear-gradient(#a8d0e8cc, #68a8d0aa 50%, #7fc0e4aa); box-shadow: inset 0 0 0 1px #b9dcef99; }
.task.active { background: linear-gradient(#e4eef6, #a9cde6 60%, #d2e6f4); }
.task.stack { width: 56px; margin-right: 4px; box-shadow: inset 0 0 0 1px #b9dcef99, 2px 0 0 #4d8eb8, 4px 0 0 #2a6894; }
.tray { display: flex; align-items: center; gap: 9px; margin-left: auto; font: 12px/18px "Noto Sans", sans-serif; }
.tray svg:first-child { margin-right: 4px; }
.tray time { display: flex; flex-direction: column; align-items: center; margin: 0 0 0 7px; }
.peek { align-self: stretch; width: 13px; margin-right: 1px; border: 1px solid #7b93b8; background: linear-gradient(135deg, #6a83ac, #24426e 50%); }
.langbar { position: absolute; right: 0; bottom: 40px; display: flex; align-items: center; justify-content: space-between; width: 79px; height: 25px; padding: 0 3px 0 4px; background: linear-gradient(#a9b2b0, #5b6664 50%, #3c4a4a); border-top: 1px solid #dde; }

/* Windows */
.window { position: absolute; padding: 0 6px 5px; border: 1px solid #cfd6da; border-radius: 7px; box-shadow: 0 0 0 1px #000, 0 2px 8px 2px #0008; }
.win-title { display: flex; align-items: center; gap: 5px; height: 28px; padding-bottom: 2px; font: 12px/18px "Noto Sans", sans-serif; }
.win-close { align-self: flex-start; margin: 0 -2px 0 auto; display: grid; place-items: center; width: 48px; height: 18px; border: 1px solid #9aa0a4; border-top: 0; border-radius: 0 0 5px 5px; background: #ffffff14; }
.win-close.red { border-color: #5a1a14; background: linear-gradient(#e5a495, #d4705f 45%, #bd3220 50%, #d8604a); box-shadow: 0 0 0 1px #fff8; }
.client { display: flex; flex-direction: column; border: 1px solid #000; outline: 1px solid #c2ccd0; background: var(--sea); }

.viewer { left: 2px; top: 517px; width: 509px;
  background: linear-gradient(118deg, #a9d4dc 0, #7ec3cd 135px, #12181c 160px, #1a2026 242px, #96303c 254px, #a53a48 340px, #b87078 430px, #c48890 100%) top / 100% 30px no-repeat, linear-gradient(90deg, #6f9fb0, #7ba9c8 40%, #8fb6d0 97%, #a44452 99%); }
.check-head { padding: 3px 2px; background: var(--pale); border-bottom: 2px solid #000; height: 30px; }
.check-head h2 { height: 23px; text-align: center; font: bold 15px/18px "Liberation Serif", serif; background: var(--sea); border: 2px solid; border-color: var(--pale-hi) var(--sea-lo) var(--sea-lo) var(--pale-hi); }
.viewer-body { display: flex; height: 379px; }
.layer-col { width: 170px; flex: none; display: flex; flex-direction: column; border-right: 2px solid #000; }
.layer-tabs { display: flex; height: 29px; gap: 2px; background: #000; padding: 0 1px 1px; }
.layer-tabs .btn { width: 48px; outline: 1px solid var(--sea); outline-offset: -1px; }
.layer-tabs .btn:last-child { width: 40px; }
.layer-tabs strong { flex: 1; text-align: center; font-style: italic; line-height: 27px; background: var(--pale); }
.layer-col .listing, .cat-col .listing { flex: 1; }
.replace { height: 33px; padding: 1px 2px 2px 6px; border-top: 1px solid #000; border-bottom: 1px solid #000; }
.replace .drop { height: 29px; }
.cat-col { flex: 1; min-width: 0; display: flex; flex-direction: column; }
.cat-tabs { display: flex; height: 31px; padding: 1px 1px 1px 1px; background: var(--pale); align-items: center; }
.cat-title { width: 207px; height: 28px; font-style: italic; outline: 1px solid var(--sea); }
.cat-tabs .drop { width: 61px; height: 28px; margin-left: auto; }
.cat-col .listing { padding-bottom: 1px; }
.stepper { display: flex; align-items: center; gap: 4px; height: 28px; padding: 0 2px; }
.stepper .btn { height: 24px; width: 44px; line-height: 18px; }
.stepper .first { width: 53px; }
.default { padding: 2px; background: #000; margin: 0 -2px; }
.default .btn { display: block; }
.stepper label { margin-left: 2px; }
.stepper input { flex: 1; min-width: 0; height: 24px; margin-left: 2px; padding: 0 0 2px 4px; background: var(--sea); border: 2px solid; border-color: var(--sea-lo) var(--sea-hi) var(--sea-hi) var(--sea-lo); }
.zoomer { display: flex; height: 32px; }
.zoom-box { width: 125px; padding: 1px 1px 1px 6px; border: 1px solid #000; border-right-width: 2px; }
.zoomer .drop { height: 28px; }
.sv { width: 28px; line-height: 30px; background: var(--pale); border: 1px solid #000; border-width: 1px 0; }
.sv-box { width: 69px; padding: 1px 2px 1px 6px; background: #18e818; border: 1px solid #000; border-left: 0; }
.show { display: flex; align-items: center; height: 26px; margin-left: 4px; }
.show input { appearance: none; width: 13px; height: 13px; margin-right: 4px; border: 2px solid; border-color: var(--sea-hi) var(--sea-lo) var(--sea-lo) var(--sea-hi); }
.actions { display: flex; justify-content: flex-end; align-items: center; gap: 4px; height: 34px; padding-right: 2px; }
.undo { width: 34px; }
.finding { height: 22px; line-height: 20px; text-align: center; border-top: 2px solid #000; border-bottom: 1px solid #000; }
.erf { height: 21px; padding-left: 2px; line-height: 19px; background: #ffffcc; border: 1px solid #000; border-width: 1px 0; }
.report { display: flex; align-items: center; gap: 4px; height: 34px; padding: 0 2px; background: var(--pale); }
.report .btn { flex: 1; height: 30px; }

.histogram { left: 1162px; top: 214px; width: 475px; border-color: #777; background: linear-gradient(100deg, #6a6a6a 0, #5a5a5a 100px, #0b0d0f 150px, #050607 290px, #33373a 100%) top / 100% 30px no-repeat, #14181a; }
.histogram .client { border-color: #6a9; margin: 0 -1px; }
.hist-top { display: flex; gap: 3px; padding: 4px 5px 0 4px; height: 292px; }
.stat-col { width: 103px; flex: none; display: flex; flex-direction: column; border: 1px solid #000; background: var(--pale); }
.radios { height: 138px; padding-top: 1px; display: flex; flex-direction: column; border-bottom: 1px solid #000; border-right: 1px solid #000; }
.radios label { display: flex; align-items: center; height: 27px; padding-left: 4px; }
.stat-col .listing { height: 115px; grid-template-rows: 1fr; }
.stat-actions { display: flex; gap: 4px; padding: 3px 2px; }
.well { min-width: 0; }
.chart-col { flex: 1; min-width: 0; display: flex; flex-direction: column; border: 1px solid #000; background: var(--pale); outline: 1px solid var(--sea-hi); }
.chart { height: 220px; display: flex; flex-direction: column; }
.chart h3 { align-self: center; height: 22px; margin: 3px 0 0 0; padding: 0 3px; border: 1px solid #000; background: #b2ffff; box-shadow: 3px 2px 0 #5f8585; font-size: 15px; line-height: 24px; font-style: italic; white-space: nowrap; }
.bars { flex: 1; display: flex; align-items: flex-end; padding-left: 4px; border-bottom: 4px solid #000; min-height: 0; }
.bar { width: 55px; display: flex; flex-direction: column; align-items: center; }
.bar span { height: 16px; line-height: 18px; font-weight: normal; }
.bar .low { color: #e01010; }
.bar i { width: 100%; background: #ff1818; border: 1px solid #000; border-right: 0; border-bottom: 0; }
.bar:last-child i { border-right: 1px solid #000; }
.ranges { display: flex; height: 30px; margin: 1px 0 6px 4px; }
.ranges div { width: 55px; display: flex; flex-direction: column; align-items: center; border: 1px solid #000; border-right: 0; background: #ff1818; font-weight: normal; line-height: 14px; white-space: pre; padding-top: 4px; }
.ranges div:last-child { border-right: 1px solid #000; }
.chart .sb { height: 15px; flex: none; }
.params { flex: 1; display: flex; border-top: 1px solid #000; }
.params .listing { width: 93px; grid-template-rows: 1fr; height: 62px; }
.resolution { flex: 1; display: flex; flex-direction: column; padding: 2px 3px 0 2px; border: 1px solid #000; border-width: 0 2px 2px 1px; }
.resolution label { text-align: center; }
.resolution output { height: 25px; padding: 5px 0 0 4px; }
.resolution input { appearance: none; width: 100%; height: 14px; background: #7fb4b4; border: 2px solid; border-color: var(--pale-lo) var(--pale-hi) var(--pale-hi) var(--pale-lo); }
.resolution input::-webkit-slider-thumb { appearance: none; width: 30px; height: 10px; background: linear-gradient(90deg, transparent 13px, var(--pale-lo) 13px, var(--pale-lo) 14px, var(--pale-hi) 14px, var(--pale-hi) 15px, transparent 15px), var(--pale); border: 2px solid; border-color: var(--pale-hi) var(--pale-lo) var(--pale-lo) var(--pale-hi); }
.sash { height: 9px; display: flex; justify-content: flex-end; align-items: center; padding-right: 10px; background: linear-gradient(var(--sea-lo), var(--sea-lo)) 0 3px / 100% 1px no-repeat, linear-gradient(var(--sea-hi), var(--sea-hi)) 0 4px / 100% 1px no-repeat; }
.sash i { width: 10px; height: 9px; background: var(--sea); border: 1px solid; border-color: var(--sea-hi) var(--sea-lo) var(--sea-lo) var(--sea-hi); }
.map { height: 162px; margin: 0 5px 0 4px; border: 1px solid #000; outline: 1px solid var(--sea-lo); display: grid; place-items: center; padding: 0 0 0 16px; }
.hist-foot { display: flex; align-items: center; gap: 4px; height: 47px; padding: 0 5px 0 4px; }
.hist-foot .ibtn { height: 38px; }
.hist-foot .big { width: 38px; }
.hist-foot p { flex: 1; height: 42px; padding-left: 3px; line-height: 38px; margin: 0 -2px; background: var(--pale); border: 1px solid #000; }
.close-row { padding: 2px 1px; background: var(--pale); border-top: 1px solid #000; }
.close-row .btn { display: block; width: 100%; height: 24px; }

.popup { right: 0; top: 245px; width: 191px; padding-right: 0; border-right: 0; border-radius: 7px 0 0 7px; border-color: #888; background: radial-gradient(ellipse 30px 10px at 130px 24px, #222a, transparent), linear-gradient(90deg, #90989c 0, #e4e8ea 50px, #a8b8c4 150px, #7f8f98) top / 100% 30px no-repeat, #14181a; }
.popup .win-close { width: 46px; margin-right: 0; background: #fff3; }
.popup h2 { height: 16px; text-align: center; font-size: 15px; line-height: 17px; background: var(--pale); }
.popup label { display: flex; align-items: center; height: 29px; padding-left: 4px; background: var(--pale); border: 1px solid #000; white-space: nowrap; }
.popup-close { margin-top: 30px; padding: 2px; border-top: 1px solid #000; }
.popup-close .btn { display: block; width: 100%; height: 25px; }
</style>
